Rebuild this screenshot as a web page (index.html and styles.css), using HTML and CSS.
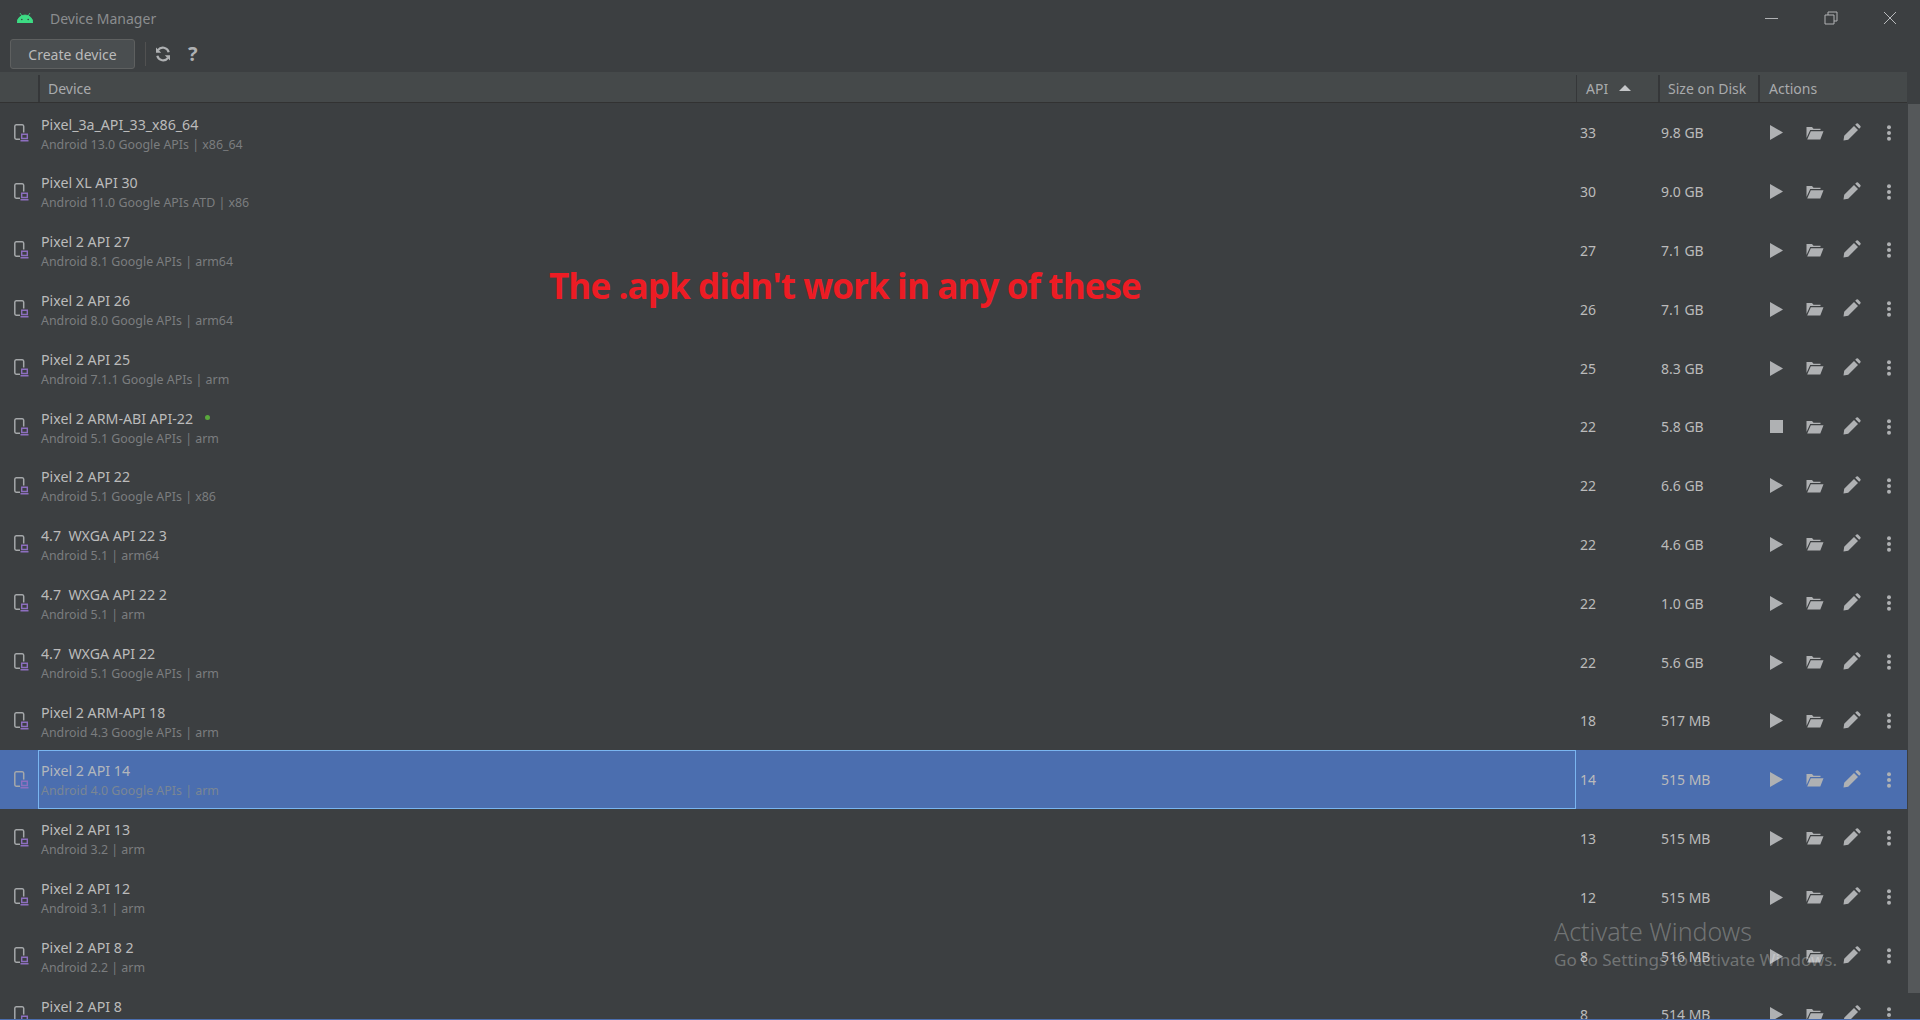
FILE: index.html
```html
<!DOCTYPE html>
<html lang="en">
<head>
<meta charset="utf-8">
<title>Device Manager</title>
<link rel="stylesheet" href="styles.css">
</head>
<body>
<svg class="defs" width="0" height="0" aria-hidden="true">
  <symbol id="i-device" viewBox="0 0 15 18">
    <path d="M6 15.300H2.200A1.500 1.500 0 0 1 .8 13.800V2.300A1.500 1.500 0 0 1 2.200 .8H8.300A1.500 1.500 0 0 1 9.700 2.300V8.500" fill="none" stroke="#a5a8aa" stroke-width="1.500"/>
    <path class="lap" d="M7.700 10.300H13.300V14.500H7.700ZM6.500 16.800H14.500" fill="none" stroke-width="1.400"/>
  </symbol>
  <symbol id="i-play" viewBox="0 0 13 15"><path d="M0 0L13 7.500L0 15Z" fill="#afb1b3"/></symbol>
  <symbol id="i-stop" viewBox="0 0 13 15"><rect width="13" height="13" x="0" y="1" fill="#afb1b3"/></symbol>
  <symbol id="i-folder" viewBox="0 0 18 14">
    <path d="M.5 1H6L7.500 2.800H14.500V4H4.200L.5 12ZM4.800 5.300H17.500L14.300 13.500H1.200Z" fill="#afb1b3"/>
  </symbol>
  <symbol id="i-pen" viewBox="0 0 18 18">
    <path d="M.5 17.500L1.200 12.800L11 3L15 7L5.200 16.800ZM12.200 1.800L13.500 .6Q14.300 0 15 .6L17.400 3Q18 3.700 17.400 4.500L16.200 5.800Z" fill="#afb1b3"/>
  </symbol>
  <symbol id="i-more" viewBox="0 0 6 16">
    <circle cx="3" cy="2.200" r="2" fill="#afb1b3"/><circle cx="3" cy="8" r="2" fill="#afb1b3"/><circle cx="3" cy="13.800" r="2" fill="#afb1b3"/>
  </symbol>
</svg>

<div class="app">
  <header class="titlebar">
    <svg class="android" viewBox="0 0 16 11" width="16" height="11">
      <path d="M0 11A8 8 0 0 1 16 11Z M3 1L5 4 M13 1L11 4" fill="#3ddc84" stroke="#3ddc84" stroke-width=".8"/>
      <circle cx="4.800" cy="7.500" r=".8" fill="#3c3f41"/><circle cx="11.200" cy="7.500" r=".8" fill="#3c3f41"/>
    </svg>
    <span class="app-title">Device Manager</span>
    <div class="winctrls">
      <svg width="14" height="14" viewBox="0 0 14 14"><path d="M0 7.500H13" stroke="#b0b2b4" stroke-width="1"/></svg>
      <svg width="14" height="14" viewBox="0 0 14 14"><path d="M1 4H10V13H1ZM4 4V1H13V10H10" fill="none" stroke="#b0b2b4" stroke-width="1"/></svg>
      <svg width="14" height="14" viewBox="0 0 14 14"><path d="M1 1L13 13M13 1L1 13" stroke="#b8babc" stroke-width="1"/></svg>
    </div>
  </header>

  <div class="toolbar">
    <button class="btn" type="button">Create device</button>
    <span class="tsep"></span>
    <svg class="refresh" width="16" height="16" viewBox="0 0 16 16">
      <path d="M13.700 6.200A6 6 0 0 0 3 4.200M2.300 9.800A6 6 0 0 0 13 11.800" fill="none" stroke="#afb1b3" stroke-width="2.200"/>
      <path d="M1 1.500V6.700H6.200ZM15 14.500V9.300H9.800Z" fill="#afb1b3"/>
    </svg>
    <span class="help">?</span>
  </div>

  <div class="table">
    <div class="thead">
      <span class="th th-icon"></span>
      <span class="th th-device">Device</span>
      <span class="th th-api">API <i class="sort"></i></span>
      <span class="th th-size">Size on Disk</span>
      <span class="th th-actions">Actions</span>
    </div>

    <div class="tbody">
      <div class="row"><svg class="dev"><use href="#i-device"/></svg><div class="cell-name"><div class="name">Pixel_3a_API_33_x86_64</div><div class="sub">Android 13.0 Google APIs | x86_64</div></div><div class="api">33</div><div class="size">9.8 GB</div><div class="acts"><svg class="a-play"><use href="#i-play"/></svg><svg class="a-folder"><use href="#i-folder"/></svg><svg class="a-pen"><use href="#i-pen"/></svg><svg class="a-more"><use href="#i-more"/></svg></div></div>
      <div class="row"><svg class="dev"><use href="#i-device"/></svg><div class="cell-name"><div class="name">Pixel XL API 30</div><div class="sub">Android 11.0 Google APIs ATD | x86</div></div><div class="api">30</div><div class="size">9.0 GB</div><div class="acts"><svg class="a-play"><use href="#i-play"/></svg><svg class="a-folder"><use href="#i-folder"/></svg><svg class="a-pen"><use href="#i-pen"/></svg><svg class="a-more"><use href="#i-more"/></svg></div></div>
      <div class="row"><svg class="dev"><use href="#i-device"/></svg><div class="cell-name"><div class="name">Pixel 2 API 27</div><div class="sub">Android 8.1 Google APIs | arm64</div></div><div class="api">27</div><div class="size">7.1 GB</div><div class="acts"><svg class="a-play"><use href="#i-play"/></svg><svg class="a-folder"><use href="#i-folder"/></svg><svg class="a-pen"><use href="#i-pen"/></svg><svg class="a-more"><use href="#i-more"/></svg></div></div>
      <div class="row"><svg class="dev"><use href="#i-device"/></svg><div class="cell-name"><div class="name">Pixel 2 API 26</div><div class="sub">Android 8.0 Google APIs | arm64</div></div><div class="api">26</div><div class="size">7.1 GB</div><div class="acts"><svg class="a-play"><use href="#i-play"/></svg><svg class="a-folder"><use href="#i-folder"/></svg><svg class="a-pen"><use href="#i-pen"/></svg><svg class="a-more"><use href="#i-more"/></svg></div></div>
      <div class="row"><svg class="dev"><use href="#i-device"/></svg><div class="cell-name"><div class="name">Pixel 2 API 25</div><div class="sub">Android 7.1.1 Google APIs | arm</div></div><div class="api">25</div><div class="size">8.3 GB</div><div class="acts"><svg class="a-play"><use href="#i-play"/></svg><svg class="a-folder"><use href="#i-folder"/></svg><svg class="a-pen"><use href="#i-pen"/></svg><svg class="a-more"><use href="#i-more"/></svg></div></div>
      <div class="row"><svg class="dev"><use href="#i-device"/></svg><div class="cell-name"><div class="name">Pixel 2 ARM-ABI API-22<i class="online"></i></div><div class="sub">Android 5.1 Google APIs | arm</div></div><div class="api">22</div><div class="size">5.8 GB</div><div class="acts"><svg class="a-play"><use href="#i-stop"/></svg><svg class="a-folder"><use href="#i-folder"/></svg><svg class="a-pen"><use href="#i-pen"/></svg><svg class="a-more"><use href="#i-more"/></svg></div></div>
      <div class="row"><svg class="dev"><use href="#i-device"/></svg><div class="cell-name"><div class="name">Pixel 2 API 22</div><div class="sub">Android 5.1 Google APIs | x86</div></div><div class="api">22</div><div class="size">6.6 GB</div><div class="acts"><svg class="a-play"><use href="#i-play"/></svg><svg class="a-folder"><use href="#i-folder"/></svg><svg class="a-pen"><use href="#i-pen"/></svg><svg class="a-more"><use href="#i-more"/></svg></div></div>
      <div class="row"><svg class="dev"><use href="#i-device"/></svg><div class="cell-name"><div class="name">4.7&nbsp; WXGA API 22 3</div><div class="sub">Android 5.1 | arm64</div></div><div class="api">22</div><div class="size">4.6 GB</div><div class="acts"><svg class="a-play"><use href="#i-play"/></svg><svg class="a-folder"><use href="#i-folder"/></svg><svg class="a-pen"><use href="#i-pen"/></svg><svg class="a-more"><use href="#i-more"/></svg></div></div>
      <div class="row"><svg class="dev"><use href="#i-device"/></svg><div class="cell-name"><div class="name">4.7&nbsp; WXGA API 22 2</div><div class="sub">Android 5.1 | arm</div></div><div class="api">22</div><div class="size">1.0 GB</div><div class="acts"><svg class="a-play"><use href="#i-play"/></svg><svg class="a-folder"><use href="#i-folder"/></svg><svg class="a-pen"><use href="#i-pen"/></svg><svg class="a-more"><use href="#i-more"/></svg></div></div>
      <div class="row"><svg class="dev"><use href="#i-device"/></svg><div class="cell-name"><div class="name">4.7&nbsp; WXGA API 22</div><div class="sub">Android 5.1 Google APIs | arm</div></div><div class="api">22</div><div class="size">5.6 GB</div><div class="acts"><svg class="a-play"><use href="#i-play"/></svg><svg class="a-folder"><use href="#i-folder"/></svg><svg class="a-pen"><use href="#i-pen"/></svg><svg class="a-more"><use href="#i-more"/></svg></div></div>
      <div class="row"><svg class="dev"><use href="#i-device"/></svg><div class="cell-name"><div class="name">Pixel 2 ARM-API 18</div><div class="sub">Android 4.3 Google APIs | arm</div></div><div class="api">18</div><div class="size">517 MB</div><div class="acts"><svg class="a-play"><use href="#i-play"/></svg><svg class="a-folder"><use href="#i-folder"/></svg><svg class="a-pen"><use href="#i-pen"/></svg><svg class="a-more"><use href="#i-more"/></svg></div></div>
      <div class="row selected"><svg class="dev"><use href="#i-device"/></svg><div class="cell-name"><div class="name">Pixel 2 API 14</div><div class="sub">Android 4.0 Google APIs | arm</div></div><div class="api">14</div><div class="size">515 MB</div><div class="acts"><svg class="a-play"><use href="#i-play"/></svg><svg class="a-folder"><use href="#i-folder"/></svg><svg class="a-pen"><use href="#i-pen"/></svg><svg class="a-more"><use href="#i-more"/></svg></div></div>
      <div class="row"><svg class="dev"><use href="#i-device"/></svg><div class="cell-name"><div class="name">Pixel 2 API 13</div><div class="sub">Android 3.2 | arm</div></div><div class="api">13</div><div class="size">515 MB</div><div class="acts"><svg class="a-play"><use href="#i-play"/></svg><svg class="a-folder"><use href="#i-folder"/></svg><svg class="a-pen"><use href="#i-pen"/></svg><svg class="a-more"><use href="#i-more"/></svg></div></div>
      <div class="row"><svg class="dev"><use href="#i-device"/></svg><div class="cell-name"><div class="name">Pixel 2 API 12</div><div class="sub">Android 3.1 | arm</div></div><div class="api">12</div><div class="size">515 MB</div><div class="acts"><svg class="a-play"><use href="#i-play"/></svg><svg class="a-folder"><use href="#i-folder"/></svg><svg class="a-pen"><use href="#i-pen"/></svg><svg class="a-more"><use href="#i-more"/></svg></div></div>
      <div class="row"><svg class="dev"><use href="#i-device"/></svg><div class="cell-name"><div class="name">Pixel 2 API 8 2</div><div class="sub">Android 2.2 | arm</div></div><div class="api">8</div><div class="size">516 MB</div><div class="acts"><svg class="a-play"><use href="#i-play"/></svg><svg class="a-folder"><use href="#i-folder"/></svg><svg class="a-pen"><use href="#i-pen"/></svg><svg class="a-more"><use href="#i-more"/></svg></div></div>
      <div class="row"><svg class="dev"><use href="#i-device"/></svg><div class="cell-name"><div class="name">Pixel 2 API 8</div><div class="sub">Android 2.2 | arm</div></div><div class="api">8</div><div class="size">514 MB</div><div class="acts"><svg class="a-play"><use href="#i-play"/></svg><svg class="a-folder"><use href="#i-folder"/></svg><svg class="a-pen"><use href="#i-pen"/></svg><svg class="a-more"><use href="#i-more"/></svg></div></div>
    </div>
    <div class="scrollbar"></div>
  </div>

  <div class="annotation">The .apk didn't work in any of these</div>
  <div class="watermark">
    <div class="wm-1">Activate Windows</div>
    <div class="wm-2">Go to Settings to activate Windows.</div>
  </div>
  <div class="bottom-line"></div>
</div>
</body>
</html>
```
FILE: styles.css
```css
* { box-sizing: border-box; }
html, body { margin: 0; height: 100%; overflow: hidden; }
body { background: #3c3f41; color: #bbbbbb; font-family: "Noto Sans", "Open Sans", sans-serif; font-size: 14px; }
.defs { position: absolute; }
.app { position: relative; width: 1920px; height: 1020px; overflow: hidden; display: flex; flex-direction: column; }

.titlebar { height: 36px; flex: none; display: flex; align-items: center; padding-left: 17px; }
.android { margin-right: 17px; margin-top: -1px; }
.app-title { font-size: 14px; color: #8b8d8f; }
.winctrls { margin-left: auto; display: flex; align-items: center; gap: 45px; padding-right: 23px; }

.toolbar { height: 36px; flex: none; display: flex; align-items: center; padding-left: 10px; padding-bottom: 1px; }
.btn { width: 125px; height: 30px; background: #4a4e50; border: 1px solid #5e6060; border-radius: 3px; color: #bbbbbb; font: 14px "Noto Sans", sans-serif; padding: 1px 0 0; }
.tsep { width: 1px; height: 24px; background: #515151; margin-left: 10px; margin-right: 9px; }
.refresh { margin-right: 17px; }
.help { font-size: 20px; font-weight: 700; color: #afb1b3; line-height: 1; }

.table { position: relative; flex: 1; min-height: 0; }
.thead { height: 31px; width: 1907px; background: #45494a; border-bottom: 1px solid #323232; display: grid; grid-template-columns: 38px 1538px 82px 100px 149px; align-items: center; }
.th { height: 27px; margin-top: 2px; border-left: 2px solid #353739; padding-left: 8px; color: #a9abad; font-size: 14px; line-height: 28px; white-space: nowrap; }
.th-icon { border-left: 0; }
.th-api { border-left-width: 1px; padding-left: 9px; }
.th-actions { padding-left: 9px; }
.sort { display: inline-block; width: 0; height: 0; margin-left: 7px; vertical-align: 3px; border-left: 6px solid transparent; border-right: 6px solid transparent; border-bottom: 6px solid #c4c6c8; }

.tbody { width: 1907px; }
.row { height: 58.8px; display: grid; grid-template-columns: 38px 1538px 82px 97px 152px; align-items: center; }
.dev { width: 15px; height: 18px; margin-left: 14px; margin-top: 1px; overflow: visible; --lap: #8d6fc0; }
.lap { stroke: var(--lap); }
.cell-name { height: 100%; padding: 10.700px 0 0 2px; border: 1px solid transparent; }
.name { font-size: 14.200px; line-height: 20px; color: #bbbbbb; white-space: nowrap; }
.sub { font-size: 12.400px; line-height: 19px; color: #7b7d7f; white-space: nowrap; }
.api, .size { font-size: 14px; color: #bbbbbb; padding-left: 4px; margin-top: 1px; }
.size { padding-left: 3px; }
.acts { position: relative; height: 100%; display: flex; align-items: center; padding: 1px 0 0 15px; }
.acts svg { flex: none; }
.a-play { width: 13px; height: 15px; margin-right: 23px; }
.a-folder { width: 18px; height: 14px; margin-right: 19px; }
.a-pen { width: 18px; height: 18px; margin-right: 25px; margin-top: -2px; }
.a-more { width: 6px; height: 16px; }
.online { display: inline-block; width: 5px; height: 5px; margin-left: 12px; vertical-align: 4px; border-radius: 50%; background: #59a83c; }

.selected { background: #4b6eaf; --lap: #afb1b3; }
.selected .cell-name { border-color: #7ab5f0; }
.selected .sub { color: #7a8694; }
.selected .name { color: #b3b7bc; }

.scrollbar { position: absolute; left: 1908px; top: 32px; width: 12px; height: 889px; background: #55585a; }

.annotation { position: absolute; left: 549px; top: 260.500px; font-family: "Open Sans", sans-serif; font-size: 35px; font-weight: 700; letter-spacing: -.9px; line-height: 50px; color: #ed1c24; white-space: nowrap; }
.watermark { position: absolute; left: 1554px; top: 914px; color: rgba(255,255,255,.28); white-space: nowrap; }
.wm-1 { font-size: 25px; line-height: 34px; font-weight: 300; }
.wm-2 { font-size: 17.100px; line-height: 24px; }
.bottom-line { position: absolute; left: 0; right: 0; bottom: 0; height: 1px; background: #4b6eaf; }
```
